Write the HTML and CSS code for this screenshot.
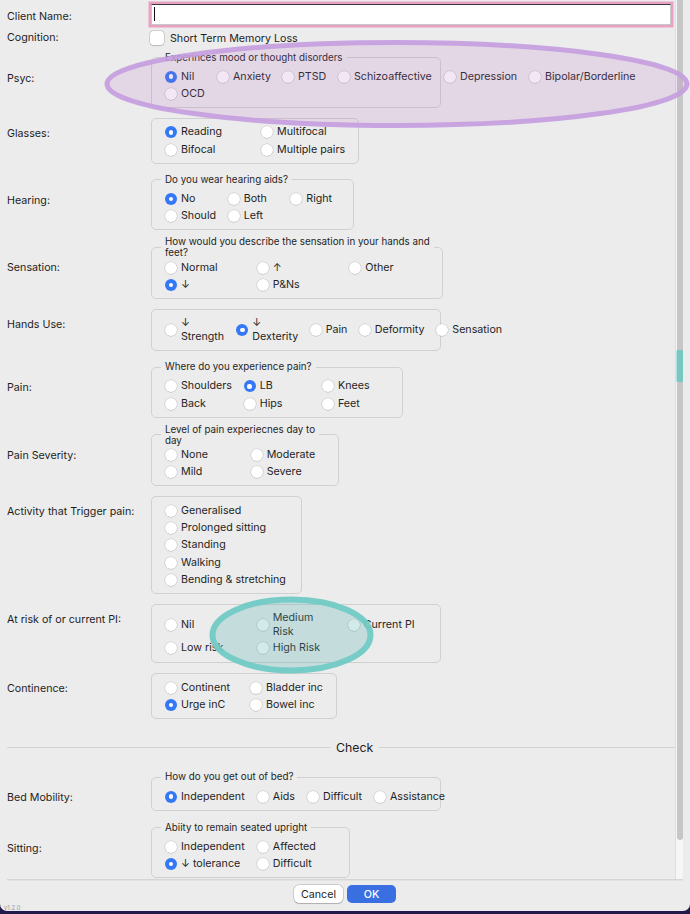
FILE: index.html
```html
<!DOCTYPE html>
<html lang="en">
<head>
<meta charset="utf-8">
<title>Client Assessment</title>
<link rel="stylesheet" href="styles.css">
</head>
<body>
<div class="window">
  <div class="main">
    <div class="content">
      <div class="row row-name">
        <span class="lbl lbl-name">Client Name:</span>
        <div class="name-field"><span class="caret"></span></div>
      </div>

      <div class="row row-cog">
        <span class="lbl lbl-cog">Cognition:</span>
        <label class="check"><span class="box"></span><span>Short Term Memory Loss</span></label>
      </div>

      <div class="row row-psyc">
        <span class="lbl lbl-l1">Psyc:</span>
        <fieldset class="grp g-psyc">
          <legend>Experinces mood or thought disorders</legend>
          <div class="opts cols-psyc">
            <label class="opt"><span class="radio on"></span><span>Nil</span></label>
            <label class="opt"><span class="radio"></span><span>Anxiety</span></label>
            <label class="opt"><span class="radio"></span><span>PTSD</span></label>
            <label class="opt"><span class="radio"></span><span>Schizoaffective</span></label>
            <label class="opt"><span class="radio"></span><span>Depression</span></label>
            <label class="opt"><span class="radio"></span><span>Bipolar/Borderline</span></label>
            <label class="opt"><span class="radio"></span><span>OCD</span></label>
          </div>
        </fieldset>
      </div>

      <div class="row">
        <span class="lbl">Glasses:</span>
        <fieldset class="grp g-glasses">
          <div class="opts cols-glasses">
            <label class="opt"><span class="radio on"></span><span>Reading</span></label>
            <label class="opt"><span class="radio"></span><span>Multifocal</span></label>
            <label class="opt"><span class="radio"></span><span>Bifocal</span></label>
            <label class="opt"><span class="radio"></span><span>Multiple pairs</span></label>
          </div>
        </fieldset>
      </div>

      <div class="row">
        <span class="lbl lbl-l1">Hearing:</span>
        <fieldset class="grp g-hearing">
          <legend>Do you wear hearing aids?</legend>
          <div class="opts cols-hearing">
            <label class="opt"><span class="radio on"></span><span>No</span></label>
            <label class="opt"><span class="radio"></span><span>Both</span></label>
            <label class="opt"><span class="radio"></span><span>Right</span></label>
            <label class="opt"><span class="radio"></span><span>Should</span></label>
            <label class="opt"><span class="radio"></span><span>Left</span></label>
          </div>
        </fieldset>
      </div>

      <div class="row row-two">
        <span class="lbl lbl-l2">Sensation:</span>
        <fieldset class="grp grp-two g-sensation">
          <legend>How would you describe the sensation in your hands and<br>feet?</legend>
          <div class="opts cols-sensation">
            <label class="opt"><span class="radio"></span><span>Normal</span></label>
            <label class="opt"><span class="radio"></span><span>↑</span></label>
            <label class="opt"><span class="radio"></span><span>Other</span></label>
            <label class="opt"><span class="radio on"></span><span>↓</span></label>
            <label class="opt"><span class="radio"></span><span>P&amp;Ns</span></label>
          </div>
        </fieldset>
      </div>

      <div class="row">
        <span class="lbl">Hands Use:</span>
        <fieldset class="grp grp-tall g-hands">
          <div class="opts cols-hands">
            <label class="opt"><span class="radio"></span><span class="two-line">↓<br>Strength</span></label>
            <label class="opt"><span class="radio on"></span><span class="two-line">↓<br>Dexterity</span></label>
            <label class="opt"><span class="radio"></span><span>Pain</span></label>
            <label class="opt"><span class="radio"></span><span>Deformity</span></label>
            <label class="opt"><span class="radio"></span><span>Sensation</span></label>
          </div>
        </fieldset>
      </div>

      <div class="row">
        <span class="lbl lbl-l1">Pain:</span>
        <fieldset class="grp g-pain">
          <legend>Where do you experience pain?</legend>
          <div class="opts cols-pain">
            <label class="opt"><span class="radio"></span><span>Shoulders</span></label>
            <label class="opt"><span class="radio on"></span><span>LB</span></label>
            <label class="opt"><span class="radio"></span><span>Knees</span></label>
            <label class="opt"><span class="radio"></span><span>Back</span></label>
            <label class="opt"><span class="radio"></span><span>Hips</span></label>
            <label class="opt"><span class="radio"></span><span>Feet</span></label>
          </div>
        </fieldset>
      </div>

      <div class="row row-two">
        <span class="lbl lbl-l2">Pain Severity:</span>
        <fieldset class="grp grp-two g-severity">
          <legend>Level of pain experiecnes day to<br>day</legend>
          <div class="opts cols-severity">
            <label class="opt"><span class="radio"></span><span>None</span></label>
            <label class="opt"><span class="radio"></span><span>Moderate</span></label>
            <label class="opt"><span class="radio"></span><span>Mild</span></label>
            <label class="opt"><span class="radio"></span><span>Severe</span></label>
          </div>
        </fieldset>
      </div>

      <div class="row">
        <span class="lbl">Activity that Trigger pain:</span>
        <fieldset class="grp g-activity">
          <div class="opts">
            <label class="opt"><span class="radio"></span><span>Generalised</span></label>
            <label class="opt"><span class="radio"></span><span>Prolonged sitting</span></label>
            <label class="opt"><span class="radio"></span><span>Standing</span></label>
            <label class="opt"><span class="radio"></span><span>Walking</span></label>
            <label class="opt"><span class="radio"></span><span>Bending &amp; stretching</span></label>
          </div>
        </fieldset>
      </div>

      <div class="row">
        <span class="lbl">At risk of or current PI:</span>
        <fieldset class="grp grp-pi g-pi">
          <div class="opts cols-pi">
            <label class="opt"><span class="radio"></span><span>Nil</span></label>
            <label class="opt"><span class="radio"></span><span class="two-line">Medium<br>Risk</span></label>
            <label class="opt"><span class="radio"></span><span>Current PI</span></label>
            <label class="opt"><span class="radio"></span><span>Low risk</span></label>
            <label class="opt"><span class="radio"></span><span>High Risk</span></label>
          </div>
        </fieldset>
      </div>

      <div class="row">
        <span class="lbl">Continence:</span>
        <fieldset class="grp g-continence">
          <div class="opts cols-continence">
            <label class="opt"><span class="radio"></span><span>Continent</span></label>
            <label class="opt"><span class="radio"></span><span>Bladder inc</span></label>
            <label class="opt"><span class="radio on"></span><span>Urge inC</span></label>
            <label class="opt"><span class="radio"></span><span>Bowel inc</span></label>
          </div>
        </fieldset>
      </div>

      <div class="sep"><span class="sep-line"></span><span class="sep-title">Check</span><span class="sep-line"></span></div>

      <div class="row row-bed">
        <span class="lbl lbl-l1">Bed Mobility:</span>
        <fieldset class="grp g-bed">
          <legend>How do you get out of bed?</legend>
          <div class="opts cols-bed">
            <label class="opt"><span class="radio on"></span><span>Independent</span></label>
            <label class="opt"><span class="radio"></span><span>Aids</span></label>
            <label class="opt"><span class="radio"></span><span>Difficult</span></label>
            <label class="opt"><span class="radio"></span><span>Assistance</span></label>
          </div>
        </fieldset>
      </div>

      <div class="row row-sitting">
        <span class="lbl lbl-l1">Sitting:</span>
        <fieldset class="grp g-sitting">
          <legend>Abiity to remain seated upright</legend>
          <div class="opts cols-sitting">
            <label class="opt"><span class="radio"></span><span>Independent</span></label>
            <label class="opt"><span class="radio"></span><span>Affected</span></label>
            <label class="opt"><span class="radio on"></span><span>↓ tolerance</span></label>
            <label class="opt"><span class="radio"></span><span>Difficult</span></label>
          </div>
        </fieldset>
      </div>
    </div>

    <div class="scroll-track"><div class="scroll-thumb"></div></div>
  </div>

  <div class="footer">
    <div class="footer-rule"></div>
    <div class="buttons">
      <button class="btn">Cancel</button>
      <button class="btn btn-primary">OK</button>
    </div>
    <div class="version">v1.2.0</div>
  </div>

  <!-- highlighter marks drawn over the form -->
  <svg class="marks" width="690" height="911" viewBox="0 0 690 911">
    <ellipse cx="397" cy="84" rx="290" ry="41.5" fill="rgba(180,105,200,0.16)" stroke="#c49ddf" stroke-width="5" stroke-opacity="0.9"/>
    <ellipse cx="291.5" cy="635" rx="79" ry="35.5" fill="rgba(80,170,170,0.25)" stroke="#72cac5" stroke-width="6" stroke-opacity="0.95"/>
    <rect x="676.5" y="350" width="6.5" height="32" rx="1" fill="#77c7c3"/>
  </svg>
</div>
</body>
</html>
```

FILE: styles.css
```css
* { box-sizing: border-box; }

html, body {
  margin: 0;
  padding: 0;
}

body {
  width: 690px;
  height: 914px;
  overflow: hidden;
  background: #1f1a4b;
  font-family: Inter, "Noto Sans", "Liberation Sans", sans-serif;
  font-size: 10.7px;
  color: #1f1f1f;
}

.window {
  position: relative;
  width: 690px;
  height: 911px;
  background: #ececec;
  border-radius: 0 0 7px 7px;
  overflow: hidden;
  display: flex;
  flex-direction: column;
}

.main {
  display: flex;
  height: 879px;
  flex: none;
}

.content {
  width: 675px;
  flex: none;
  height: 879px;
  overflow: hidden;
  padding-left: 7px;
}

/* ---------- form rows ---------- */

.row {
  display: grid;
  grid-template-columns: 144px auto;
  align-items: start;
  margin-top: 10px;
}

.row-name { margin-top: 4px; }
.row-cog { margin-top: 6px; align-items: center; }
.row-psyc { margin-top: 6.5px; }
.row-two { margin-top: 6px; }
.row-bed { margin-top: 16.3px; }
.row-sitting { margin-top: 11px; }

.lbl {
  line-height: 14px;
  margin-top: 8.5px;
  white-space: nowrap;
  color: #1e1e1e;
}

.lbl-name { margin-top: 5.7px; }
.lbl-cog { margin-top: 0; }
.lbl-l1 { margin-top: 20px; }
.lbl-l2 { margin-top: 25px; }

/* ---------- client name entry ---------- */

.name-field {
  position: relative;
  width: 520px;
  height: 21px;
  background: #fff;
  border: 1px solid #c8c8c8;
  border-top-color: #3a3a3a;
  box-shadow: 0 0 0 2.5px #e9a1c3;
}

.caret {
  position: absolute;
  left: 2px;
  top: 2px;
  width: 1px;
  height: 14px;
  background: #111;
}

/* ---------- checkbox ---------- */

.check {
  display: flex;
  align-items: center;
  gap: 6px;
  margin-left: -1px;
  height: 14px;
}

.check .box {
  width: 14px;
  height: 14px;
  border-radius: 3.5px;
  background: #fff;
  box-shadow: 0 0 0 0.5px rgba(0, 0, 0, 0.22), 0 0.5px 1px rgba(0, 0, 0, 0.12);
}

/* ---------- group boxes ---------- */

.grp {
  margin: 0;
  min-width: 0;
  border: 1px solid #d0d0d0;
  border-radius: 5px;
  padding: 4px 0 5px 13px;
}

.grp legend {
  margin-left: -4px;
  padding: 0 4px 1px;
  font-size: 9.8px;
  line-height: 11px;
  color: #1f1f1f;
}

.grp-two { padding-top: 0; }
.grp-two legend { padding-bottom: 0; }

.grp-tall { padding: 5.5px 0 6.5px 13px; }
.grp-pi { padding: 5px 0 6px 13px; }

.g-psyc { width: 290px; }
.g-glasses { width: 207.5px; }
.g-hearing { width: 203px; }
.g-sensation { width: 292px; }
.g-hands { width: 290px; }
.g-pain { width: 251.5px; }
.g-severity { width: 187.5px; }
.g-activity { width: 150.5px; }
.g-pi { width: 290px; }
.g-continence { width: 185.5px; }
.g-bed { width: 290px; }
.g-sitting { width: 198.5px; }

/* ---------- radio options ---------- */

.opts {
  display: grid;
  grid-auto-rows: 17.33px;
  grid-template-columns: auto;
}

.cols-psyc { grid-template-columns: 52px 65px 56px 106px 85px auto; }
.cols-glasses { grid-template-columns: 96px 96px; }
.cols-hearing { grid-template-columns: 62.7px 62.6px auto; }
.cols-sensation { grid-template-columns: 91.7px 92.6px auto; }
.cols-hands { grid-template-columns: 71.3px 73.4px 49px 77.6px auto; grid-auto-rows: 28px; }
.cols-pain { grid-template-columns: 78.7px 78.3px auto; }
.cols-severity { grid-template-columns: 85.7px auto; }
.cols-pi { grid-template-columns: 91.7px 91px auto; grid-template-rows: 28px 17.33px; row-gap: 1px; }
.cols-continence { grid-template-columns: 85px auto; }
.cols-bed { grid-template-columns: 91.8px 50.2px 67px auto; }
.cols-sitting { grid-template-columns: 91.8px auto; }

.opt {
  display: flex;
  align-items: center;
  gap: 4px;
  padding-top: 1px;
  white-space: nowrap;
  line-height: 14px;
}

.two-line { line-height: 14px; }

.radio {
  position: relative;
  flex: none;
  width: 12px;
  height: 12px;
  border-radius: 50%;
  background: #fff;
  box-shadow: 0 0 0 0.5px rgba(0, 0, 0, 0.16), 0 0.5px 1px rgba(0, 0, 0, 0.1);
}

.radio.on {
  background: #3478f6;
  box-shadow: none;
}

/* white centre dot of the selected radio */
.radio.on::after {
  content: "";
  position: absolute;
  left: 3.75px;
  top: 3.75px;
  width: 4.5px;
  height: 4.5px;
  border-radius: 50%;
  background: #fff;
}

/* ---------- section separator ---------- */

.sep {
  display: grid;
  grid-template-columns: 323px auto 1fr;
  align-items: center;
  column-gap: 6px;
  height: 15px;
  margin-top: 21px;
}

.sep-line {
  height: 1px;
  background: #d2d2d2;
}

.sep-title {
  font-size: 12.3px;
  line-height: 15px;
  color: #1e1e1e;
}

/* ---------- scrollbar ---------- */

.scroll-track {
  width: 8px;
  flex: none;
  height: 879px;
  background: #f6f6f6;
  border-left: 1px solid #dedede;
}

.scroll-thumb {
  width: 6px;
  height: 840px;
  margin-left: 0.5px;
  background: #c6c6c6;
  border-radius: 0 0 3px 3px;
}

/* ---------- footer ---------- */

.footer {
  flex: 1;
  display: flex;
  flex-direction: column;
}

.footer-rule {
  margin: 0 7px;
  height: 1px;
  background: #d5d5d5;
  box-shadow: 0 1px 0 #e3e3e3;
}

.buttons {
  display: flex;
  justify-content: center;
  gap: 4px;
  margin-top: 5px;
}

.btn {
  width: 49px;
  height: 18px;
  padding: 0;
  border: none;
  border-radius: 5px;
  font-family: Inter, "Noto Sans", sans-serif;
  font-size: 10.7px;
  color: #1f1f1f;
  background: #fff;
  box-shadow: 0 0 0 0.5px rgba(0, 0, 0, 0.25), 0 0.5px 1px rgba(0, 0, 0, 0.15);
}

.btn-primary {
  background: #3a6fe2;
  color: #fff;
  font-weight: 500;
  box-shadow: none;
}

.version {
  margin-top: 2px;
  padding-left: 4px;
  font-size: 6px;
  line-height: 6px;
  color: #9a9a9a;
}

/* ---------- highlighter overlay ---------- */

.marks {
  position: absolute;
  left: 0;
  top: 0;
  pointer-events: none;
}
```
